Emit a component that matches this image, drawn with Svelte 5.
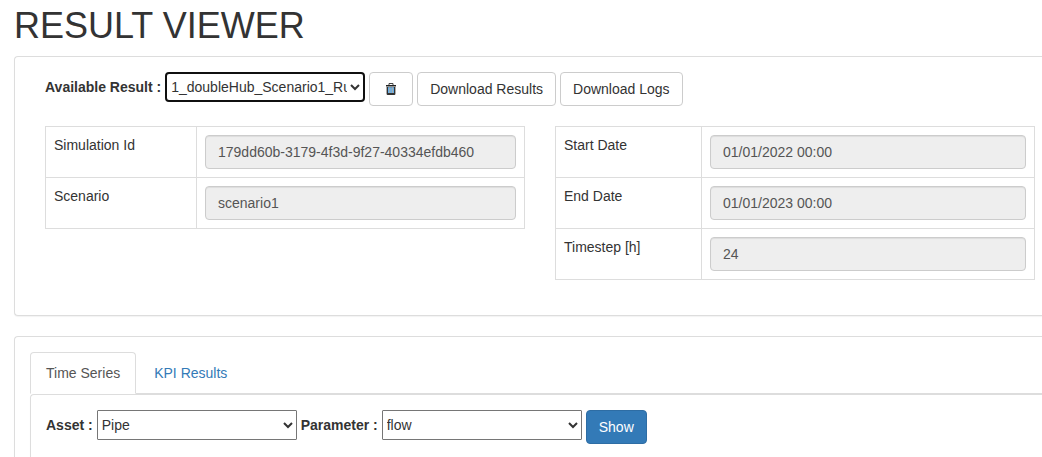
<script>
  const results = ['1_doubleHub_Scenario1_Run_01'];
  const assets = ['Pipe'];
  const parameters = ['flow'];

  const tables = [
    {
      kind: 'simulation',
      rows: [
        { id: 'simulation-id', label: 'Simulation Id', value: '179dd60b-3179-4f3d-9f27-40334efdb460' },
        { id: 'scenario', label: 'Scenario', value: 'scenario1' }
      ]
    },
    {
      kind: 'period',
      rows: [
        { id: 'start-date', label: 'Start Date', value: '01/01/2022 00:00' },
        { id: 'end-date', label: 'End Date', value: '01/01/2023 00:00' },
        { id: 'timestep', label: 'Timestep [h]', value: '24' }
      ]
    }
  ];

  let tab = $state('series');
</script>

<main class="page">
  <h1>RESULT VIEWER</h1>

  <section class="panel summary">
    <div class="toolbar">
      <label for="result">Available Result :</label>
      <select id="result" class="current">
        {#each results as result}<option>{result}</option>{/each}
      </select>
      <button type="button" class="btn icon" aria-label="Delete result">
        <svg width="12" height="14" viewBox="0 0 12 14" aria-hidden="true">
          <path d="M4 3V1.5h4V3" fill="none" stroke="#444" />
          <path d="M1 3h10v1.5H1z" fill="#222" />
          <path d="M1.6 5h8.8v7q0 1-1 1H2.6q-1 0-1-1z" fill="#333" />
          <path d="M3 5.2h6v5.8H3z" fill="#62aeea" />
          <path d="M4.4 5.2h.9v5.8h-.9zM6.9 5.2h.9v5.8h-.9z" fill="#b9ab9b" />
        </svg>
      </button>
      <button type="button" class="btn">Download Results</button>
      <button type="button" class="btn">Download Logs</button>
    </div>

    <div class="details">
      {#each tables as table}
        <table class={table.kind}>
          <tbody>
            {#each table.rows as row}
              <tr>
                <td class="name"><label for={row.id}>{row.label}</label></td>
                <td><input id={row.id} type="text" value={row.value} readonly /></td>
              </tr>
            {/each}
          </tbody>
        </table>
      {/each}
    </div>
  </section>

  <section class="panel charts">
    <div class="tabs" role="tablist">
      <button type="button" role="tab" aria-selected={tab === 'series'} class="tab" class:active={tab === 'series'} onclick={() => (tab = 'series')}>Time Series</button>
      <button type="button" role="tab" aria-selected={tab === 'kpi'} class="tab" class:active={tab === 'kpi'} onclick={() => (tab = 'kpi')}>KPI Results</button>
    </div>
    <div class="panel content">
      {#if tab === 'series'}
        <div class="toolbar">
          <label for="asset">Asset :</label>
          <select id="asset">
            {#each assets as asset}<option>{asset}</option>{/each}
          </select>
          <label for="parameter">Parameter :</label>
          <select id="parameter">
            {#each parameters as parameter}<option>{parameter}</option>{/each}
          </select>
          <button type="button" class="btn primary">Show</button>
        </div>
      {/if}
    </div>
  </section>
</main>

<style>
  :global(body) {
    margin: 0;
    background: #fff;
  }
  .page, .page * {
    box-sizing: border-box;
  }
  .page {
    display: flex;
    flex-direction: column;
    min-height: 100vh;
    padding: 6px 0 0 14px;
    font: 14px/20px "Liberation Sans", Arial, sans-serif;
    color: #333;
  }
  h1 {
    margin: 0 0 10px;
    font-size: 36px;
    line-height: 40px;
    font-weight: 500;
  }
  .panel {
    border: 1px solid #ddd;
    border-right: 0;
    border-radius: 4px 0 0 4px;
    background: #fff;
    box-shadow: 0 1px 1px rgba(0, 0, 0, 0.05);
  }
  .summary {
    margin-bottom: 20px;
    padding: 15px 7px 35px 30px;
  }
  .charts {
    display: flex;
    flex-direction: column;
    flex: 1;
    padding: 15px 0 0 15px;
    border-bottom: 0;
    border-bottom-left-radius: 0;
  }
  .content {
    flex: 1;
    padding: 15px 15px 13px;
    border-bottom: 0;
    border-bottom-left-radius: 0;
  }
  .toolbar {
    display: flex;
    align-items: flex-start;
    gap: 4px;
  }
  .toolbar label {
    line-height: 30px;
    font-weight: 700;
    white-space: nowrap;
  }
  select {
    width: 200px;
    height: 30px;
    margin: 0;
    padding: 0;
    border: 1px solid #767676;
    border-radius: 1px;
    background-color: #fff;
    color: #333;
    font: inherit;
  }
  select.current {
    border: 2px solid #101010;
    border-radius: 4px;
  }
  .btn {
    height: 34px;
    margin: 0;
    padding: 6px 12px;
    border: 1px solid #ccc;
    border-radius: 4px;
    background: #fff;
    color: #333;
    font: inherit;
    white-space: nowrap;
    cursor: pointer;
  }
  .icon {
    display: flex;
    align-items: center;
    justify-content: center;
    width: 44px;
  }
  .primary {
    border-color: #2e6da4;
    background: #337ab7;
    color: #fff;
  }
  .details {
    display: grid;
    grid-template-columns: 1fr 1fr;
    align-items: start;
    gap: 30px;
    margin-top: 20px;
  }
  table {
    width: 100%;
    table-layout: fixed;
    border-collapse: collapse;
  }
  td {
    padding: 8px;
    border: 1px solid #ddd;
    vertical-align: top;
  }
  .simulation .name {
    width: 151px;
  }
  .period .name {
    width: 146px;
  }
  input {
    display: block;
    width: 100%;
    height: 34px;
    margin: 0;
    padding: 6px 12px;
    border: 1px solid #ccc;
    border-radius: 4px;
    background: #eee;
    box-shadow: inset 0 1px 1px rgba(0, 0, 0, 0.075);
    color: #555;
    font: inherit;
  }
  .tabs {
    display: flex;
    gap: 2px;
    border-bottom: 1px solid #ddd;
  }
  .tab {
    margin: 0 0 -1px;
    padding: 10px 15px;
    border: 1px solid transparent;
    border-radius: 4px 4px 0 0;
    background: transparent;
    color: #337ab7;
    font: inherit;
    cursor: pointer;
  }
  .tab.active {
    border-color: #ddd;
    border-bottom-color: #fff;
    background: #fff;
    color: #555;
  }
</style>
